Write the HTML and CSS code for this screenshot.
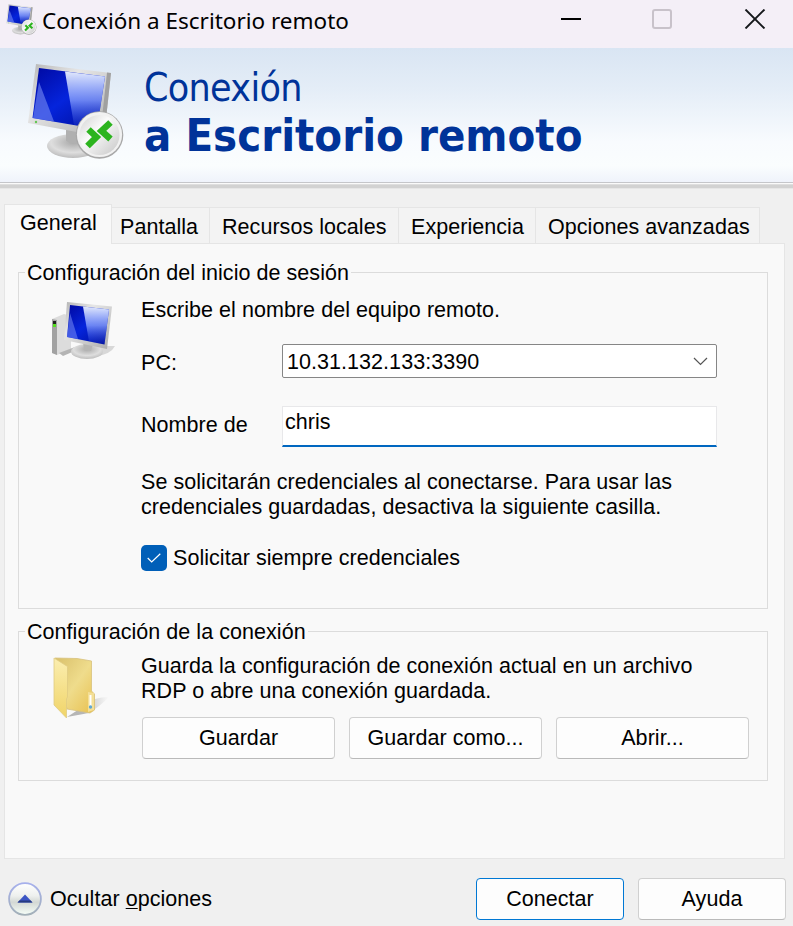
FILE: index.html
```html
<!DOCTYPE html>
<html lang="es">
<head>
<meta charset="utf-8">
<title>Conexión a Escritorio remoto</title>
<link rel="stylesheet" href="styles.css">
</head>
<body>
<svg width="0" height="0" class="defs" aria-hidden="true">
  <defs>
    <linearGradient id="frame" x1="0" y1="0" x2="1" y2="1"><stop offset="0" stop-color="#b4b4b4"/><stop offset=".35" stop-color="#e6e6e6"/><stop offset="1" stop-color="#aaa"/></linearGradient>
    <linearGradient id="screen" x1="0" y1="0" x2=".9" y2="1"><stop offset="0" stop-color="#0008a0"/><stop offset=".5" stop-color="#0524dc"/><stop offset="1" stop-color="#000e9a"/></linearGradient>
    <linearGradient id="shine" x1="0" y1="0" x2="0" y2="1"><stop offset="0" stop-color="#eef4ff" stop-opacity=".95"/><stop offset=".5" stop-color="#8ea6ff" stop-opacity=".75"/><stop offset="1" stop-color="#3050e0" stop-opacity=".1"/></linearGradient>
    <radialGradient id="foot" cx=".5" cy=".35" r=".7"><stop offset="0" stop-color="#a9a9a9"/><stop offset=".6" stop-color="#dedede"/><stop offset="1" stop-color="#b5b5b5"/></radialGradient>
    <linearGradient id="disc" x1="0" y1="0" x2="1" y2="1"><stop offset="0" stop-color="#d2d2d2"/><stop offset=".4" stop-color="#fafafa"/><stop offset="1" stop-color="#c6c6c6"/></linearGradient>
    <linearGradient id="fold" x1="0" y1="0" x2="0" y2="1"><stop offset="0" stop-color="#fbeeb0"/><stop offset="1" stop-color="#f0d468"/></linearGradient>
    <linearGradient id="foldback" x1="0" y1="0" x2="1" y2="1"><stop offset="0" stop-color="#d9c06a"/><stop offset=".5" stop-color="#efdc8c"/><stop offset="1" stop-color="#e8c04e"/></linearGradient>
    <linearGradient id="shadow" x1="0" y1="0" x2="1" y2="0"><stop offset=".4" stop-color="#999" stop-opacity=".7"/><stop offset="1" stop-color="#bbb" stop-opacity="0"/></linearGradient>
    <linearGradient id="ball" x1="0" y1="0" x2="0" y2="1"><stop offset="0" stop-color="#fff"/><stop offset=".4" stop-color="#eef0ee"/><stop offset=".6" stop-color="#d3d8d4"/><stop offset="1" stop-color="#f7fff9"/></linearGradient>
    <linearGradient id="rim" x1="0" y1="0" x2="0" y2="1"><stop offset="0" stop-color="#a6b0ec"/><stop offset="1" stop-color="#a3b0b8"/></linearGradient>
    <symbol id="remote" viewBox="0 0 100 100">
      <ellipse cx="45" cy="83" rx="26" ry="12" fill="url(#foot)"/>
      <path d="M38 66 L58 70 L56 80 Q46 83 38 78Z" fill="#b0b0b0"/>
      <path d="M8 1 L83 10 L76 74 L0 60Z" fill="url(#frame)"/>
      <path d="M79 9.500 L83 10 L76 74 L72 73Z" fill="#a0a0a0"/>
      <path d="M11 5 L77 13.500 L69 66 L4.500 55Z" fill="url(#screen)"/>
      <path d="M37 8.500 L77 13.500 L69 66 L46 62Z" fill="url(#shine)"/>
      <path d="M11 19 L26 58.500 L5 55Z" fill="#6d82f0" opacity=".65"/>
      <circle cx="8" cy="59" r="1.200" fill="#62c653"/>
      <circle cx="71.500" cy="72" r="23.800" fill="#a8a8a8"/>
      <circle cx="71.500" cy="71.500" r="22.600" fill="#f1f1f1"/>
      <circle cx="71.500" cy="72" r="20" fill="url(#disc)"/>
      <path d="M60.500 66.500 L68.500 74 L59.500 83" fill="none" stroke="#2cb41e" stroke-width="6.500"/>
      <path d="M82.500 59.500 L73.500 68 L82.500 76" fill="none" stroke="#2cb41e" stroke-width="6.500"/>
    </symbol>
  </defs>
</svg>
<div class="window">
  <header class="titlebar">
    <svg class="app-icon" width="31" height="32"><use href="#remote" width="32" height="32"/></svg>
    <span class="caption">Conexión a Escritorio remoto</span>
    <svg class="controls" width="206" height="20" viewBox="0 0 206 20" fill="none">
      <path d="M0 10H20" stroke="#000" stroke-width="2"/>
      <rect x="92" y="1" width="18" height="18" rx="2" stroke="#c8c2ca" stroke-width="2"/>
      <path d="M184.500 .5 L203.500 19.500 M203.500 .5 L184.500 19.500" stroke="#15181b" stroke-width="1.900"/>
    </svg>
  </header>

  <section class="banner">
    <svg class="banner-icon" width="100" height="100"><use href="#remote" width="100" height="100"/></svg>
    <h1><span class="thin">Conexión</span><span class="heavy">a Escritorio remoto</span></h1>
  </section>
  <div class="rule"></div>

  <nav class="tabs">
    <div class="tab active">General</div>
    <div class="tab t2">Pantalla</div>
    <div class="tab t3">Recursos locales</div>
    <div class="tab t4">Experiencia</div>
    <div class="tab t5">Opciones avanzadas</div>
  </nav>

  <main class="panel">
    <fieldset class="login">
      <legend>Configuración del inicio de sesión</legend>
      <div class="cols">
        <svg class="side-icon" width="68" height="60" viewBox="0 0 68 60">
          <path d="M44 52 L50 44 L64 44 Q60 52 46 54Z" fill="#d8d8d8"/>
          <path d="M1 17 L13 12 L20 14 V47 L6 53 L1 51Z" fill="#dcdcdc"/>
          <path d="M1 17 L6 18 V53 L1 51Z" fill="#a2a2a2"/>
          <rect x="2" y="19" width="3" height="3" fill="#222"/><rect x="2" y="22" width="3" height="3" fill="#55e020"/>
          <path d="M8 51 L24 45 L26 48 L12 54Z" fill="#b4b4b4"/>
          <ellipse cx="36" cy="49.500" rx="16" ry="7.500" fill="url(#foot)"/>
          <path d="M32 40 L42 42 L40 49 L33 48Z" fill="#b4b4b4"/>
          <path d="M16 0 L61 4.500 L56 47 L13 38Z" fill="url(#frame)"/>
          <path d="M19 3 L58 7.500 L53.500 42.500 L16 35Z" fill="url(#screen)"/>
          <path d="M32 4.500 L58 7.500 L53.500 42.500 L38 39.500Z" fill="url(#shine)"/>
          <path d="M19 11 L27 37 L16 35Z" fill="#6d82f0" opacity=".6"/>
        </svg>
        <div class="body">
          <p class="line">Escribe el nombre del equipo remoto.</p>
          <div class="row pc"><span class="label">PC:</span>
            <div class="combo"><span>10.31.132.133:3390</span>
              <svg width="15" height="9" viewBox="0 0 15 9" fill="none"><path d="M1 1 L7.500 7.500 L14 1" stroke="#555" stroke-width="1.200"/></svg>
            </div>
          </div>
          <div class="row user"><span class="label">Nombre de</span><div class="input">chris</div></div>
          <p class="note">Se solicitarán credenciales al conectarse. Para usar las<br>credenciales guardadas, desactiva la siguiente casilla.</p>
          <div class="check">
            <span class="box"><svg width="14" height="10" viewBox="0 0 14 10" fill="none"><path d="M.7 5 L4.700 9 L13.300 .7" stroke="#fff" stroke-width="1.200"/></svg></span>
            <span>Solicitar siempre credenciales</span>
          </div>
        </div>
      </div>
    </fieldset>

    <fieldset class="connection">
      <legend>Configuración de la conexión</legend>
      <div class="cols">
        <svg class="side-icon folder" width="60" height="64" viewBox="0 0 60 64">
          <path d="M14 60 L36 56 Q46 50 56 40 Q48 40 42 42Z" fill="url(#shadow)"/>
          <path d="M2 1 L24 1.500 L38.500 4 V34 L41.500 37 V53 L37 56 L14 52 Z" fill="url(#foldback)" stroke="#d8c27c" stroke-width=".8"/>
          <path d="M35 35 L41 36 V53 L35 55Z" fill="#f4df96"/>
          <path d="M37.500 38 V49" stroke="#fff" stroke-width="2"/>
          <circle cx="37.500" cy="50" r="1.700" fill="#62a8d0"/>
          <path d="M1 1 L14.500 9.500 V40 L13.500 42 V61 L1 48Z" fill="url(#fold)" stroke="#dfcc83" stroke-width=".8"/>
        </svg>
        <div class="body">
          <p class="note">Guarda la configuración de conexión actual en un archivo<br>RDP o abre una conexión guardada.</p>
          <div class="buttons">
            <button>Guardar</button><button>Guardar como...</button><button>Abrir...</button>
          </div>
        </div>
      </div>
    </fieldset>
  </main>

  <footer class="footer">
    <svg class="toggle" width="34" height="34" viewBox="0 0 34 34">
      <circle cx="17" cy="17" r="15.900" fill="url(#ball)" stroke="url(#rim)" stroke-width="1.800"/>
      <path d="M9.500 20.500 L17 12.500 L24.500 20.500Z" fill="#3b55c4"/>
      <path d="M9.500 20.500 L11.500 18.500 H22.500 L24.500 20.500Z" fill="#263b80"/>
    </svg>
    <span class="options">Ocultar <u>o</u>pciones</span>
    <button class="primary">Conectar</button>
    <button>Ayuda</button>
  </footer>
</div>
</body>
</html>
```
FILE: styles.css
```css
* { box-sizing: border-box; }
body { margin: 0; font-family: "Liberation Sans", Arial, sans-serif; font-size: 21.5px; letter-spacing: .05px; line-height: 25px; color: #000; white-space: nowrap; }
.defs { position: absolute; }
p, h1, fieldset { margin: 0; padding: 0; min-width: 0; }
svg { display: block; flex: none; }

.window { width: 793px; height: 926px; overflow: hidden; background: #f0f0f0; display: flex; flex-direction: column; }
.titlebar { height: 48px; flex: none; background: #f4eff7; display: flex; padding: 4px 26px 0 6px; }
.caption { margin: 2px 0 0 5px; font: 22.500px/30px "Noto Sans", sans-serif; letter-spacing: 0; }
.controls { margin: 5px 0 0 auto; }

.banner { height: 134px; flex: none; display: flex; background: linear-gradient(#d9e5f3 0, #e4edf7 30%, #f8fbfe 70%, #fafdfe 88%, #eff3fb 100%); padding: 14px 0 0 28px; }
.banner-icon { margin-top: 1px; }
.banner h1 { margin: 2px 0 0 16px; color: #003399; font: 39px/47px "DejaVu Sans Condensed", "DejaVu Sans", sans-serif; font-stretch: condensed; letter-spacing: -.7px; }
.banner h1 span { display: block; }
.banner .heavy { margin-top: 1px; font-size: 45px; font-weight: bold; letter-spacing: 0; }
.rule { height: 7px; flex: none; background: linear-gradient(#c5c6ca 0 1px, #fafafa 1px 2px, #dedede 2px 3px, #d2d2d2 3px 6px, #e6e6e6 6px); }

.tabs { display: flex; flex: none; align-items: flex-end; height: 54px; padding-left: 4px; }
.tab { height: 36px; padding: 7px 0 0 9px; background: #f3f3f3; border: 1px solid #e5e5e5; border-left: 0; border-bottom: 0; }
.tab.active { width: 108px; height: 40px; margin-bottom: -1px; padding: 6px 0 0 15px; background: #f9f9f9; border-left: 1px solid #e5e5e5; z-index: 1; }
.t2 { width: 98px; padding-left: 8px; }
.t3 { width: 189px; padding-left: 12px; }
.t4 { width: 137px; padding-left: 12px; }
.t5 { width: 224px; padding-left: 12px; }

.panel { width: 781px; height: 616px; flex: none; margin-left: 4px; padding: 17px 16px 0 13px; background: #f9f9f9; border: 1px solid #e5e5e5; }
fieldset { border: 1px solid #dcdcdc; }
legend { height: 23px; line-height: 24px; margin-left: 6px; padding: 0 2px; }
.login { height: 348px; }
.connection { height: 161px; margin-top: 11px; }
.cols { display: flex; }
.side-icon { margin: 18px 0 0 32px; }
.login .side-icon { margin-right: 22px; }
.connection .side-icon { margin: 14px 28px 0 34px; }
.login .body { padding-top: 14px; width: 576px; }
.connection .body { padding-top: 11px; }
.row { display: flex; align-items: center; }
.label { width: 141px; }
.pc { margin-top: 21px; height: 34px; }
.pc .label { padding-top: 5px; }
.user { margin-top: 28px; height: 41px; }
.user .label { padding-bottom: 3px; }
.combo, .input { width: 435px; height: 100%; background: #fff; }
.combo { border: 1px solid #868686; border-radius: 2px; display: flex; align-items: center; justify-content: space-between; padding: 1px 8px 0 4px; }
.combo span { padding-top: 2px; }
.input { border: 1px solid #e8e8ea; border-bottom: 2px solid #0067c0; padding: 3px 0 0 2px; }
.login .note { margin-top: 23px; }
.check { display: flex; align-items: center; gap: 6px; margin-top: 25px; height: 26px; }
.box { width: 26px; height: 26px; border-radius: 5px; background: #005fb8; display: grid; place-items: center; }
.buttons { display: flex; gap: 14px; margin: 13px 0 0 1px; }
button { width: 193px; height: 42px; padding: 0; font: inherit; letter-spacing: inherit; color: #000; background: #fdfdfd; border: 1px solid #d0d0d0; border-bottom-color: #bababa; border-radius: 4px; }

.footer { display: flex; align-items: center; padding: 12px 7px 0 8px; height: 67px; }
.options { margin: 0 auto 0 8px; padding-top: 2px; }
.options u { text-underline-offset: 2px; text-decoration-thickness: 1px; }
.footer button { width: 148px; margin-left: 14px; padding-top: 2px; }
.footer .primary { border-color: #0078d4; }
```
